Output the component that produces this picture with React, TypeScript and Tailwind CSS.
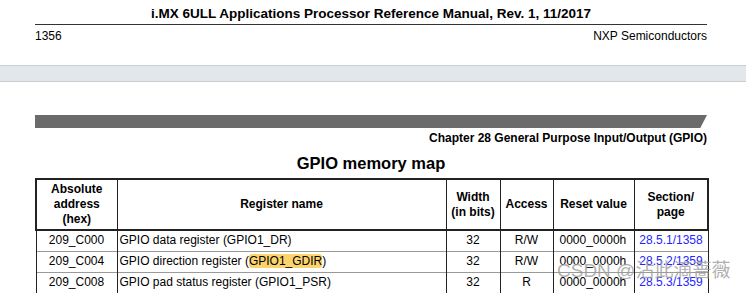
import React from "react";

const rows = [
  { addr: "209_C000", name: "GPIO data register (GPIO1_DR)", access: "R/W", page: "28.5.1/1358" },
  { addr: "209_C004", name: "GPIO direction register (", hl: "GPIO1_GDIR", tail: ")", access: "R/W", page: "28.5.2/1359" },
  { addr: "209_C008", name: "GPIO pad status register (GPIO1_PSR)", access: "R", page: "28.5.3/1359" },
];

export default function App() {
  return (
    <div className="relative h-[293px] w-[746px] overflow-hidden bg-white text-black" style={{ fontFamily: '"Liberation Sans", Arial, sans-serif' }}>
      {/* page header */}
      <div className="mx-[35px] w-[672px]">
        <div className="h-[25px] border-b border-[#333] pt-[6px] text-center text-[13.5px] font-bold leading-[16px]">
          i.MX 6ULL Applications Processor Reference Manual, Rev. 1, 11/2017
        </div>
        <div className="flex justify-between pt-[4px] text-[12px] leading-[15px]">
          <span>1356</span>
          <span>NXP Semiconductors</span>
        </div>
      </div>

      {/* viewer gap between pages */}
      <div className="mt-[21px] h-[17px] border-y border-[#c9ced2] bg-[#e2e7eb]" />

      {/* next page */}
      <div className="ml-[35px] w-[672px] pt-[33px]">
        <div className="h-[13px] bg-[#6b6b6b]" style={{ clipPath: "polygon(0 0, 100% 0, 99% 100%, 0 100%)" }} />
        <div className="pt-[3px] text-right text-[12px] font-bold leading-[15px]">
          Chapter 28 General Purpose Input/Output (GPIO)
        </div>
        <div className="pt-[7px] text-center text-[16.5px] font-bold leading-[20px]">GPIO memory map</div>

        <table className="mt-[5px] w-[672px] table-fixed border-collapse text-[12px] leading-[15px]">
          <colgroup>
            <col className="w-[81px]" />
            <col className="w-[329px]" />
            <col className="w-[54px]" />
            <col className="w-[53px]" />
            <col className="w-[81px]" />
            <col className="w-[74px]" />
          </colgroup>
          <thead>
            <tr className="h-[51px] border-2 border-[#222] font-bold">
              <th className="border-x border-[#222] px-1">Absolute<br />address<br />(hex)</th>
              <th className="border-x border-[#222]">Register name</th>
              <th className="border-x border-[#222] px-0">Width<br />(in bits)</th>
              <th className="border-x border-[#222]">Access</th>
              <th className="border-x border-[#222] px-0">Reset value</th>
              <th className="border-x border-[#222]">Section/<br />page</th>
            </tr>
          </thead>
          <tbody>
            {rows.map((r) => (
              <tr key={r.addr} className="h-[21px] border-b border-[#9a9a9a]">
                <td className="border-x border-[#222] text-center">{r.addr}</td>
                <td className="border-x border-[#222] pl-[2px]">
                  {r.name}
                  {r.hl && <span className="rounded-[3px] bg-[#fbd46e]">{r.hl}</span>}
                  {r.tail}
                </td>
                <td className="border-x border-[#222] text-center">32</td>
                <td className="border-x border-[#222] text-center">{r.access}</td>
                <td className="border-x border-[#222] pl-[6px]">0000_0000h</td>
                <td className="border-x border-[#222] text-center text-[#2424ff]">{r.page}</td>
              </tr>
            ))}
          </tbody>
        </table>
      </div>

      {/* watermark */}
      <div className="absolute left-[557px] top-[259px] text-[19px] leading-[24px] text-[#9c9c9c]/80" style={{ fontFamily: '"Liberation Sans", "Noto Sans CJK SC", sans-serif' }}>
        CSDN @沾此滴蔷薇
      </div>
    </div>
  );
}
